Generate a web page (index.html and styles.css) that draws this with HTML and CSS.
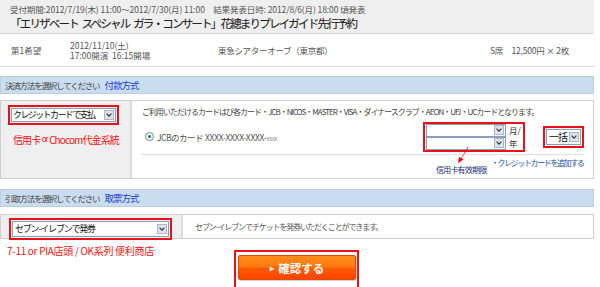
FILE: index.html
```html
<!DOCTYPE html>
<html lang="ja">
<head>
  <meta charset="UTF-8">
  <title>先行予約</title>
  <link rel="stylesheet" href="styles.css">
</head>
<body>

<div class="page">
  <div class="head">
    <div class="period">受付期間:2012/7/19(木) 11:00～2012/7/30(月) 11:00　結果発表日時: 2012/8/6(月) 18:00 頃発表</div>
    <h1 class="title">「エリザベート&nbsp;スペシャル&nbsp;ガラ・コンサート」花總まりプレイガイド先行予約</h1>
  </div>

  <div class="order">
    <div class="o-label">第1希望</div>
    <div class="o-date">2012/11/10(土)<br>17:00開演&nbsp; 16:15開場</div>
    <div class="o-venue">東急シアターオーブ（東京都）</div>
    <div class="o-price">S席　12,500円 × 2枚</div>
  </div>

  <div class="sec-head">決済方法を選択してください <a class="sec-link">付款方式</a></div>
  <div class="box pay-box">
    <div class="box-left">
      <div class="mark">
        <div class="sel sel-pay"><span class="sel-text">クレジットカードで支払</span><span class="sel-btn"><svg width="7" height="5" viewBox="0 0 7 5"><path d="M0.5 0.8 L3.5 4 L6.5 0.8" fill="none" stroke="#333" stroke-width="1.4"/></svg></span></div>
      </div>
      <div class="note note-pay">信用卡 <span class="or">or</span> Chocom代金系統</div>
    </div>
    <div class="box-right">
      <div class="info">ご利用いただけるカードはび各カード・JCB・NICOS・MASTER・VISA・ダイナースクラブ・AEON・UFJ・UCカードとなります。</div>
      <div class="card-row">
        <div class="card">
          <span class="radio"><span class="radio-dot"></span></span>
          <span class="card-name">JCBのカード</span>
          <span class="card-no">XXXX-XXXX-XXXX-<small>xxxx</small></span>
        </div>
        <div class="mark mark-date">
          <div class="date-line"><div class="sel sel-date"><span class="sel-text"></span><span class="sel-btn"><svg width="7" height="5" viewBox="0 0 7 5"><path d="M0.5 0.8 L3.5 4 L6.5 0.8" fill="none" stroke="#333" stroke-width="1.4"/></svg></span></div><span class="unit">月/</span></div>
          <div class="date-line"><div class="sel sel-date"><span class="sel-text"></span><span class="sel-btn"><svg width="7" height="5" viewBox="0 0 7 5"><path d="M0.5 0.8 L3.5 4 L6.5 0.8" fill="none" stroke="#333" stroke-width="1.4"/></svg></span></div><span class="unit">年</span></div>
        </div>
        <div class="mark mark-lump">
          <div class="sel sel-lump"><span class="sel-text">一括</span><span class="sel-btn"><svg width="7" height="5" viewBox="0 0 7 5"><path d="M0.5 0.8 L3.5 4 L6.5 0.8" fill="none" stroke="#333" stroke-width="1.4"/></svg></span></div>
        </div>
      </div>
      <div class="card-foot">
        <span class="expiry">信用卡有效期限</span>
        <a class="add-card">・クレジットカードを追加する</a>
        <svg class="arrow" width="14" height="18" viewBox="0 0 14 18"><path d="M11 1 L4 13" stroke="#e00" stroke-width="1" stroke-dasharray="2 1" fill="none"/><path d="M1 17 L2 11 L6.5 13.5 Z" fill="#e00"/></svg>
      </div>
    </div>
  </div>

  <div class="sec-head sec-head-2">引取方法を選択してください <a class="sec-link">取票方式</a></div>
  <div class="box pick-box">
    <div class="box-left box-left-wide">
      <div class="mark">
        <div class="sel sel-pick"><span class="sel-text">セブン-イレブンで発券</span><span class="sel-btn"><svg width="7" height="5" viewBox="0 0 7 5"><path d="M0.5 0.8 L3.5 4 L6.5 0.8" fill="none" stroke="#333" stroke-width="1.4"/></svg></span></div>
      </div>
    </div>
    <div class="pick-text">セブン-イレブンでチケットを発券いただくことができます。</div>
  </div>

  <div class="bottom">
    <div class="note note-pick">7-11 or PIA店頭 / OK系列 便利商店</div>
    <div class="submit-wrap">
      <button type="button" class="submit"><span class="tri">▸</span> 確認する</button>
    </div>
  </div>
</div>

</body>
</html>
```

FILE: styles.css
```css
body {
  margin: 0;
  background: #fff;
  font-family: "Noto Sans CJK JP", "Noto Sans", sans-serif;
  font-size: 9px;
  color: #444;
}
.page {
  width: 594px;
}
.head {
  background: #efefef;
  border-bottom: 1px solid #d6d6d6;
  height: 34px;
  padding: 3px 0 0 10px;
  box-sizing: border-box;
}
.period {
  font-size: 8.5px;
  line-height: 12px;
  letter-spacing: -0.1px;
  color: #555;
}
.title {
  margin: 0;
  font-size: 11.5px;
  font-weight: normal;
  line-height: 17px;
  letter-spacing: -1.8px;
  word-spacing: 3px;
  color: #222;
  -webkit-text-stroke: 0.1px #222;
}
.order {
  display: flex;
  align-items: center;
  height: 32px;
  border-bottom: 1px solid #dcdcdc;
  font-size: 8.5px;
  line-height: 10.5px;
  color: #555;
}
.o-label { width: 59px; padding-left: 11px; }
.o-date { width: 148px; }
.o-venue { width: 272px; letter-spacing: -0.3px; }
.o-price { letter-spacing: -0.2px; }

.sec-head {
  margin-top: 9px;
  height: 18px;
  background: #c9dcf0;
  border: 1px solid #b8cce2;
  box-sizing: border-box;
  padding-left: 4px;
  display: flex;
  align-items: center;
  font-size: 8.5px;
  letter-spacing: -1.2px;
  color: #444;
}
.sec-link {
  color: #1a3ccf;
  font-size: 9.5px;
  letter-spacing: -1px;
  margin-left: 5px;
}
.sec-head-2 { margin-top: 10px; }

.box {
  display: flex;
  border: 1px solid #cfcfcf;
  box-sizing: border-box;
}
.pay-box { margin-top: 6px; height: 79px; }
.pick-box { margin-top: 7px; height: 25px; }
.box-left {
  width: 131px;
  background: #efefef;
  border-right: 2px solid #dcdcdc;
  padding: 4px 0 0 7px;
  box-sizing: border-box;
}
.box-left-wide { width: 182px; padding: 3px 0 0 8px; }

.mark {
  display: inline-block;
  border: 2px solid #e8111b;
  padding: 1px;
}
.sel {
  display: flex;
  align-items: center;
  height: 12px;
  border: 1px solid #8a9fb8;
  background: #fff;
}
.sel-text {
  flex: 1;
  font-size: 9px;
  line-height: 12px;
  letter-spacing: -1.2px;
  color: #111;
  padding-left: 2px;
  white-space: nowrap;
}
.sel-btn {
  width: 10px;
  height: 10px;
  margin-right: 1px;
  background: #dde3ec;
  border: 1px solid #aab7c8;
  box-sizing: border-box;
  display: flex;
  align-items: center;
  justify-content: center;
}
.sel-btn svg { width: 6px; height: 4px; }
.sel-pay { width: 103px; }
.sel-pay .sel-text { letter-spacing: -1.6px; padding-left: 1px; }
.sel-pick { width: 155px; height: 14px; }
.sel-pick .sel-text { font-size: 9px; letter-spacing: -1.2px; }
.sel-date { width: 78px; height: 11px; }
.sel-lump { width: 33px; height: 14px; }
.sel-lump .sel-text { font-size: 10px; letter-spacing: -1px; }

.note {
  color: #f01010;
  font-size: 10px;
  letter-spacing: -0.9px;
}
.note-pay { margin-top: 7px; padding-left: 5px; }
.or { font-size: 8px; vertical-align: 2px; }

.box-right {
  flex: 1;
  padding: 5px 9px 0 10px;
  position: relative;
}
.info {
  font-size: 8px;
  line-height: 12px;
  letter-spacing: -1px;
  color: #444;
  white-space: nowrap;
}
.card-row {
  display: flex;
  align-items: center;
  margin-top: 4px;
  height: 29px;
}
.card {
  flex: 1;
  display: flex;
  align-items: center;
  font-size: 8.5px;
  color: #555;
  padding-left: 3px;
}
.radio {
  width: 7px;
  height: 7px;
  border: 1px solid #6f8ba8;
  border-radius: 50%;
  background: #eef3f8;
  display: flex;
  align-items: center;
  justify-content: center;
  margin-right: 3px;
}
.radio-dot {
  width: 3px;
  height: 3px;
  border-radius: 50%;
  background: #2d7a2d;
}
.card-name { width: 48px; letter-spacing: -0.5px; }
.card-no { letter-spacing: -0.3px; }
.card-no small { font-size: 6px; color: #888; }

.mark-date { padding: 0 2px 0 1px; }
.date-line {
  display: flex;
  align-items: center;
  height: 13px;
}
.unit {
  font-size: 8.5px;
  color: #333;
  margin-left: 3px;
  width: 12px;
}
.mark-lump { margin-left: 18px; }

.card-foot {
  border-top: 1px solid #dedede;
  margin-top: 3px;
  height: 23px;
  position: relative;
}
.expiry {
  position: absolute;
  left: 294px;
  top: 9px;
  font-size: 8px;
  letter-spacing: -0.8px;
  color: #1a2a7a;
  white-space: nowrap;
}
.add-card {
  position: absolute;
  left: 349px;
  top: 2px;
  font-size: 8px;
  letter-spacing: -1.4px;
  color: #1f4fa8;
  white-space: nowrap;
}
.arrow {
  position: absolute;
  left: 315px;
  top: -9px;
}

.pick-text {
  padding-left: 12px;
  align-self: center;
  font-size: 8px;
  letter-spacing: -1.1px;
  color: #555;
}

.bottom {
  position: relative;
  height: 50px;
}
.note-pick { padding: 4px 0 0 7px; letter-spacing: -0.3px; }
.submit-wrap {
  position: absolute;
  left: 234px;
  top: 11px;
  width: 125px;
  height: 40px;
  border: 2px solid #e8111b;
  box-sizing: border-box;
  padding: 3px 0 0 2px;
}
.submit {
  width: 118px;
  height: 25px;
  border: 1px solid #e24a00;
  border-radius: 2px;
  background: linear-gradient(#ff8c1c 0%, #ff7a10 45%, #ff5a00 55%, #ff4400 100%);
  color: #fff;
  font-family: "Noto Sans CJK JP", sans-serif;
  font-size: 11.5px;
  font-weight: bold;
  padding: 0;
  box-shadow: 1px 1px 1px #ccc;
}
.tri { font-size: 8px; vertical-align: 2px; margin-right: 2px; }
```
